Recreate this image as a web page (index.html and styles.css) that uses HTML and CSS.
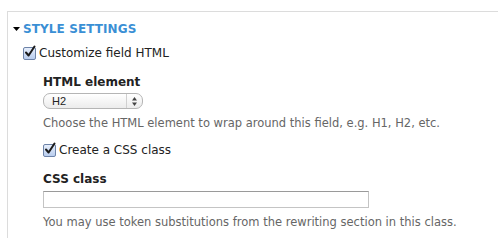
FILE: index.html
```html
<!DOCTYPE html>
<html>
<head>
<meta charset="utf-8">
<link rel="stylesheet" href="styles.css">
</head>
<body>
<div class="fieldset">
  <div class="legend">
    <svg class="arrow" width="7" height="4" viewBox="0 0 7 4"><polygon points="0,0 7,0 3.5,4" fill="#000"/></svg>
    <span class="legend-text">STYLE SETTINGS</span>
  </div>
  <div class="content">
    <div class="check-row">
      <span class="checkbox"><svg width="14" height="14" viewBox="0 0 14 14"><path d="M3 7.5 L5.6 10.5 L11.5 1.5" fill="none" stroke="#1a1a1a" stroke-width="2" stroke-linecap="round" stroke-linejoin="round"/></svg></span>
      <span class="check-label">Customize field HTML</span>
    </div>
    <div class="sub">
      <div class="field-label">HTML element</div>
      <div class="select">
        <span class="select-value">H2</span>
        <span class="select-arrows"><svg width="5" height="9" viewBox="0 0 5 9"><polygon points="2.5,0 5,3.5 0,3.5" fill="#444"/><polygon points="0,5.5 5,5.5 2.5,9" fill="#444"/></svg></span>
      </div>
      <div class="desc">Choose the HTML element to wrap around this field, e.g. H1, H2, etc.</div>
      <div class="check-row sub-check">
        <span class="checkbox"><svg width="14" height="14" viewBox="0 0 14 14"><path d="M3 7.5 L5.6 10.5 L11.5 1.5" fill="none" stroke="#1a1a1a" stroke-width="2" stroke-linecap="round" stroke-linejoin="round"/></svg></span>
        <span class="check-label">Create a CSS class</span>
      </div>
      <div class="field-label css-label">CSS class</div>
      <div class="text-input"></div>
      <div class="desc">You may use token substitutions from the rewriting section in this class.</div>
    </div>
  </div>
</div>
</body>
</html>
```
FILE: styles.css
```css
html, body {
  margin: 0;
  padding: 0;
  background: #fff;
}
body {
  font-family: "DejaVu Sans", Verdana, sans-serif;
  color: #222;
  width: 498px;
  height: 238px;
  overflow: hidden;
}
.fieldset {
  box-sizing: border-box;
  margin: 11px 0 0 7px;
  border-top: 1px solid #dcdcdc;
  border-left: 1px solid #dcdcdc;
  height: 227px;
  padding: 0;
}
.legend {
  display: flex;
  align-items: center;
  padding: 10px 0 0 5px;
  height: 14px;
}
.arrow {
  display: block;
  margin-right: 3px;
}
.legend-text {
  font-size: 12px;
  font-weight: bold;
  color: #3a8fd5;
  line-height: 14px;
  letter-spacing: 0.1px;
}
.content {
  padding-left: 15px;
}
.check-row {
  display: flex;
  align-items: center;
  height: 16px;
  margin-top: 9px;
}
.checkbox {
  position: relative;
  width: 11px;
  height: 11px;
  border: 1px solid #6d83a8;
  border-radius: 2px;
  background: linear-gradient(#e6eefb, #b9cdee);
  margin-right: 3px;
  flex: none;
}
.checkbox svg {
  position: absolute;
  left: -1px;
  top: -3px;
}
.check-label {
  font-size: 12px;
  line-height: 16px;
}
.sub {
  padding-left: 20px;
}
.field-label {
  font-size: 12px;
  font-weight: bold;
  line-height: 16px;
  margin-top: 13px;
}
.select {
  display: flex;
  align-items: center;
  width: 98px;
  height: 14px;
  margin-top: 3px;
  border: 1px solid #b5b5b5;
  border-radius: 7px;
  background: linear-gradient(#ffffff, #ececec);
}
.select-value {
  flex: 1;
  font-family: "Liberation Sans", Arial, sans-serif;
  font-size: 11px;
  padding-left: 8px;
  color: #222;
  line-height: 14px;
}
.select-arrows {
  width: 15px;
  height: 14px;
  border-left: 1px solid #d0d0d0;
  display: flex;
  align-items: center;
  justify-content: center;
}
.select-arrows svg {
  display: block;
}
.desc {
  font-size: 11.5px;
  color: #666;
  line-height: 14px;
  margin-top: 7px;
}
.sub-check {
  margin-top: 12px;
}
.css-label {
  margin-top: 13px;
}
.text-input {
  width: 324px;
  height: 15px;
  margin-top: 4px;
  border: 1px solid #c4c4c4;
  border-top-color: #9a9a9a;
  background: #fff;
}
```
